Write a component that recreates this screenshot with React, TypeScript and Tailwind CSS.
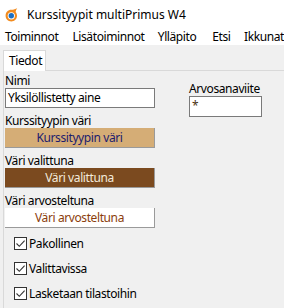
import React from "react";

function Logo() {
  return (
    <svg width="13" height="14" viewBox="0 0 13 14" className="shrink-0">
      <path d="M6.3 1.8 C3.0 1.8 0.6 4.4 0.6 7.7 C0.6 10.9 3.0 13.4 6.3 13.4 C9.6 13.4 12.0 10.9 12.0 7.7 C12.0 6.2 11.5 4.9 10.6 3.9 C10.8 2.7 11.3 1.3 12.2 0.2 C10.4 0.8 8.8 1.8 6.3 1.8 Z" fill="#f28b1e" />
      <circle cx="6.3" cy="7.8" r="3.6" fill="#ffffff" />
      <circle cx="6.3" cy="7.8" r="2.7" fill="#1b6ec2" />
    </svg>
  );
}

function Check({ label }: { label: string }) {
  return (
    <div className="flex items-center h-[25px]">
      <div className="w-[13px] h-[13px] border border-[#333333] bg-white flex items-center justify-center ml-[9px]">
        <svg width="11" height="11" viewBox="0 0 11 11">
          <path d="M1.5 5.5 L4.3 8.3 L9.6 2.6" fill="none" stroke="#333333" strokeWidth="1.1" />
        </svg>
      </div>
      <span className="ml-[2px] text-[12px] leading-[14px] tracking-[-0.4px] text-black">{label}</span>
    </div>
  );
}

export default function App() {
  return (
    <div
      className="w-[284px] h-[308px] overflow-hidden bg-[#f0f0f0] text-black tracking-[-0.4px]"
      style={{ fontFamily: '"Noto Sans", "Segoe UI", sans-serif' }}
    >
      <div className="h-[29px] bg-white flex items-center pl-[5px] gap-[9px]">
        <Logo />
        <span className="text-[12px] leading-[16px] whitespace-nowrap tracking-[0px]">Kurssityypit multiPrimus W4</span>
      </div>
      <div className="h-[16px] bg-white flex items-center text-[12px] leading-[16px] whitespace-nowrap">
        <span className="ml-[5px] w-[68px]">Toiminnot</span>
        <span className="w-[86px]">Lisätoiminnot</span>
        <span className="w-[55px]">Ylläpito</span>
        <span className="w-[32px]">Etsi</span>
        <span>Ikkunat</span>
      </div>
      <div className="h-[5px]" />
      <div className="flex h-[21px] items-end">
        <div className="ml-[3px] w-[43px] h-[21px] bg-white border border-b-0 border-[#d9d9d9] flex items-center pl-[5px] text-[12px] leading-[14px]">
          Tiedot
        </div>
        <div className="flex-1 border-b border-[#d9d9d9]" />
      </div>
      <div className="ml-[3px] border-l border-[#d9d9d9] h-[240px] flex">
        <div className="w-[151px] pl-[1px] flex flex-col">
          <div className="h-[3px]" />
          <div className="text-[12px] leading-[14px] h-[14px]">Nimi</div>
          <div className="h-[20px] bg-white border border-[#7a7a7a] text-[12px] leading-[18px] pl-[2px] whitespace-nowrap">
            Yksilöllistetty aine
          </div>
          <div className="h-[6px]" />
          <div className="text-[12px] leading-[14px] h-[14px]">Kurssityypin väri</div>
          <div className="h-[20px] bg-[#d5ad76] border-r border-b border-[#9a9a9a] text-[12px] leading-[19px] text-center text-[#1c1c6e]">
            Kurssityypin väri
          </div>
          <div className="h-[6px]" />
          <div className="text-[12px] leading-[14px] h-[14px]">Väri valittuna</div>
          <div className="h-[20px] bg-[#7b4a1f] border-r border-b border-[#9a9a9a] text-[12px] leading-[19px] text-center text-[#f3eadc]">
            Väri valittuna
          </div>
          <div className="h-[6px]" />
          <div className="text-[12px] leading-[14px] h-[14px]">Väri arvosteltuna</div>
          <div className="h-[20px] bg-white border-r border-b border-[#9a9a9a] text-[12px] leading-[19px] text-center text-[#8b3d0c]">
            Väri arvosteltuna
          </div>
          <div className="h-[3px]" />
          <Check label="Pakollinen" />
          <Check label="Valittavissa" />
          <Check label="Lasketaan tilastoihin" />
        </div>
        <div className="ml-[34px] flex flex-col">
          <div className="h-[11px]" />
          <div className="text-[12px] leading-[14px] h-[14px]">Arvosanaviite</div>
          <div className="w-[73px] h-[21px] bg-white border border-[#7a7a7a] text-[12px] leading-[18px] pl-[2px] text-[#4a3210]">
            *
          </div>
        </div>
      </div>
    </div>
  );
}
